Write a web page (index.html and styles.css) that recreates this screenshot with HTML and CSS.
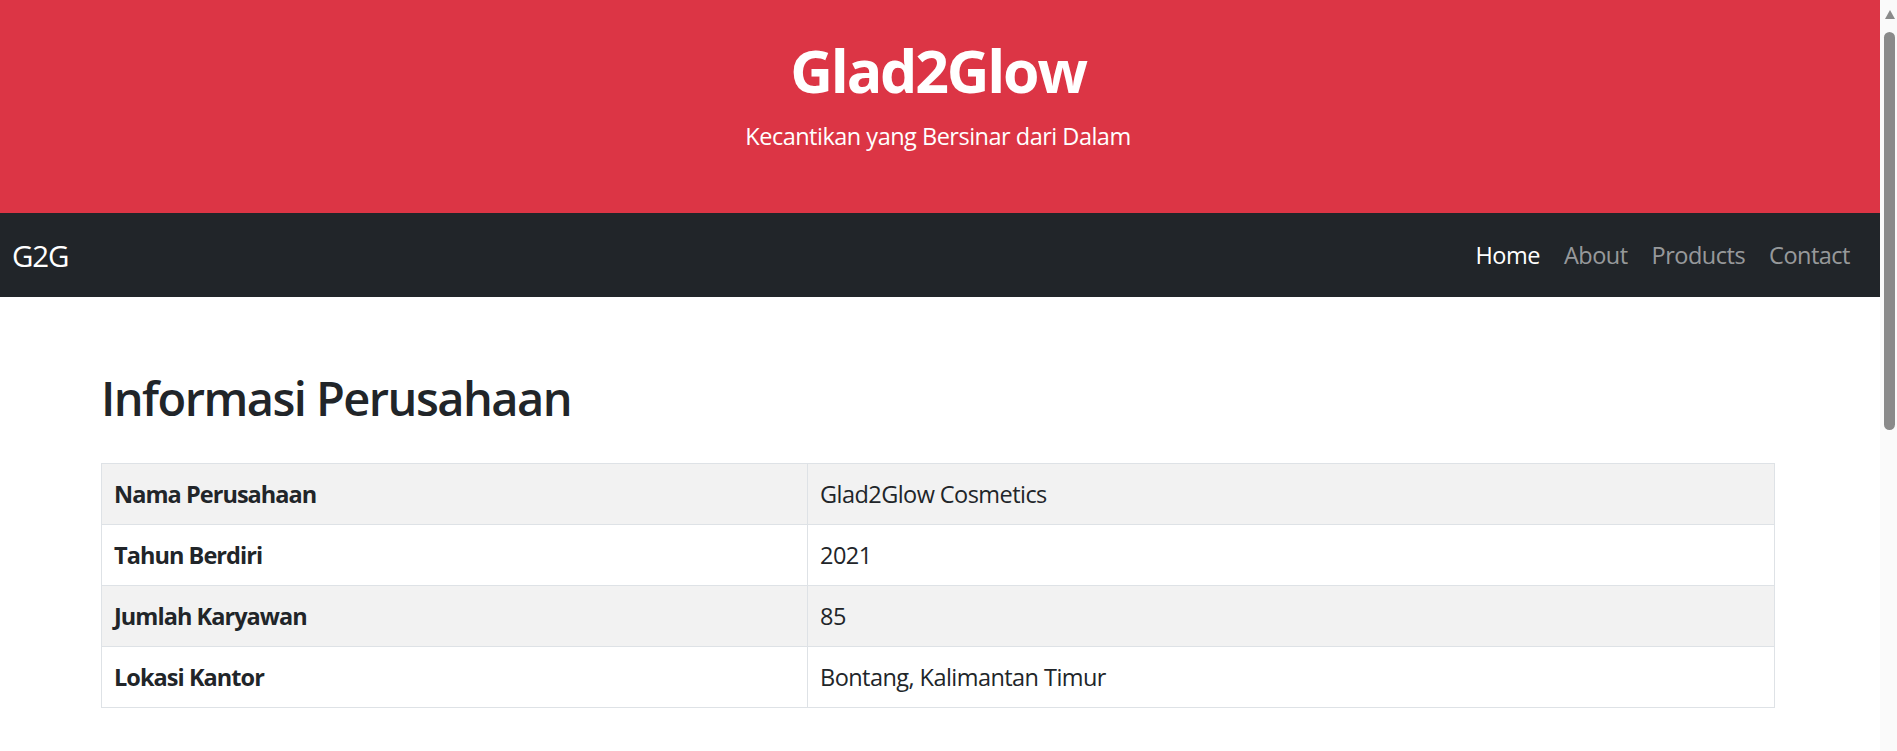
FILE: index.html
```html
<!DOCTYPE html>
<html lang="id">
<head>
<meta charset="utf-8">
<title>Glad2Glow</title>
<link rel="stylesheet" href="styles.css">
</head>
<body>
<div class="window">
  <div class="page">
    <header class="hero">
      <h1 class="hero-title">Glad2Glow</h1>
      <p class="hero-sub">Kecantikan yang Bersinar dari Dalam</p>
    </header>
    <nav class="navbar">
      <a class="brand" href="#">G2G</a>
      <ul class="nav">
        <li><a class="nav-link active" href="#">Home</a></li>
        <li><a class="nav-link" href="#">About</a></li>
        <li><a class="nav-link" href="#">Products</a></li>
        <li><a class="nav-link" href="#">Contact</a></li>
      </ul>
    </nav>
    <main class="main">
      <div class="container">
        <h2 class="section-title">Informasi Perusahaan</h2>
        <table class="info-table">
          <colgroup><col class="col-label"><col></colgroup>
          <tbody>
            <tr><th>Nama Perusahaan</th><td>Glad2Glow Cosmetics</td></tr>
            <tr><th>Tahun Berdiri</th><td>2021</td></tr>
            <tr><th>Jumlah Karyawan</th><td>85</td></tr>
            <tr><th>Lokasi Kantor</th><td>Bontang, Kalimantan Timur</td></tr>
          </tbody>
        </table>
      </div>
    </main>
  </div>
  <div class="scrollbar">
    <div class="scroll-arrow"></div>
    <div class="scroll-thumb"></div>
  </div>
</div>
</body>
</html>
```
FILE: styles.css
```css
* { box-sizing: border-box; }
html, body { margin: 0; padding: 0; }
body {
  font-family: "Open Sans", "Noto Sans", sans-serif;
  color: #212529;
  background: #fff;
}
.window {
  display: flex;
  width: 1897px;
  height: 751px;
  overflow: hidden;
}
.page {
  flex: 0 0 1880px;
  width: 1880px;
  height: 751px;
  overflow: hidden;
}
.hero {
  background: #dc3545;
  color: #fff;
  text-align: center;
  padding: 34px 4px 59px 0;
  height: 213px;
}
.hero-title {
  margin: 0 0 12px;
  font-size: 59px;
  line-height: 72px;
  font-weight: 700;
  letter-spacing: -2.2px;
}
.hero-sub {
  margin: 0;
  font-size: 23.5px;
  line-height: 36px;
  letter-spacing: -0.5px;
}
.navbar {
  background: #212529;
  height: 84px;
  display: flex;
  align-items: center;
  justify-content: space-between;
  padding: 0 18px 0 12px;
}
.brand {
  color: #fff;
  text-decoration: none;
  font-size: 29.5px;
  line-height: 45px;
  letter-spacing: -1.2px;
}
.nav {
  list-style: none;
  margin: 0;
  padding: 0;
  display: flex;
}
.nav-link {
  display: block;
  padding: 0 12px;
  font-size: 23.5px;
  line-height: 36px;
  letter-spacing: -0.5px;
  color: rgba(255, 255, 255, 0.55);
  text-decoration: none;
}
.nav-link.active { color: #fff; }
.main { padding-top: 73px; }
.container {
  width: 1674px;
  margin-left: 101px;
}
.section-title {
  margin: 0 0 35.4px;
  font-size: 47px;
  line-height: 57.6px;
  font-weight: 550;
  letter-spacing: -1.55px;
}
.info-table {
  width: 100%;
  border-collapse: collapse;
  table-layout: fixed;
  font-size: 23.5px;
  line-height: 36px;
}
.col-label { width: 706px; }
.info-table th,
.info-table td {
  border: 1px solid #dee2e6;
  padding: 12px;
  text-align: left;
  vertical-align: top;
}
.info-table th { font-weight: 700; letter-spacing: -0.95px; }
.info-table td { font-weight: 400; letter-spacing: -0.55px; }
.info-table tr:nth-child(odd) th,
.info-table tr:nth-child(odd) td { background: #f2f2f2; }
.scrollbar {
  flex: 0 0 17px;
  width: 17px;
  height: 751px;
  background: #fafafa;
  display: flex;
  flex-direction: column;
  align-items: center;
  padding-top: 10px;
}
.scroll-arrow {
  width: 0;
  height: 0;
  border-left: 5px solid transparent;
  border-right: 5px solid transparent;
  border-bottom: 9px solid #8a8a8a;
  margin-left: 2px;
}
.scroll-thumb {
  margin-top: 13px;
  margin-left: 2px;
  width: 11px;
  height: 398px;
  border-radius: 6px;
  background: #8a8a8a;
}
```
